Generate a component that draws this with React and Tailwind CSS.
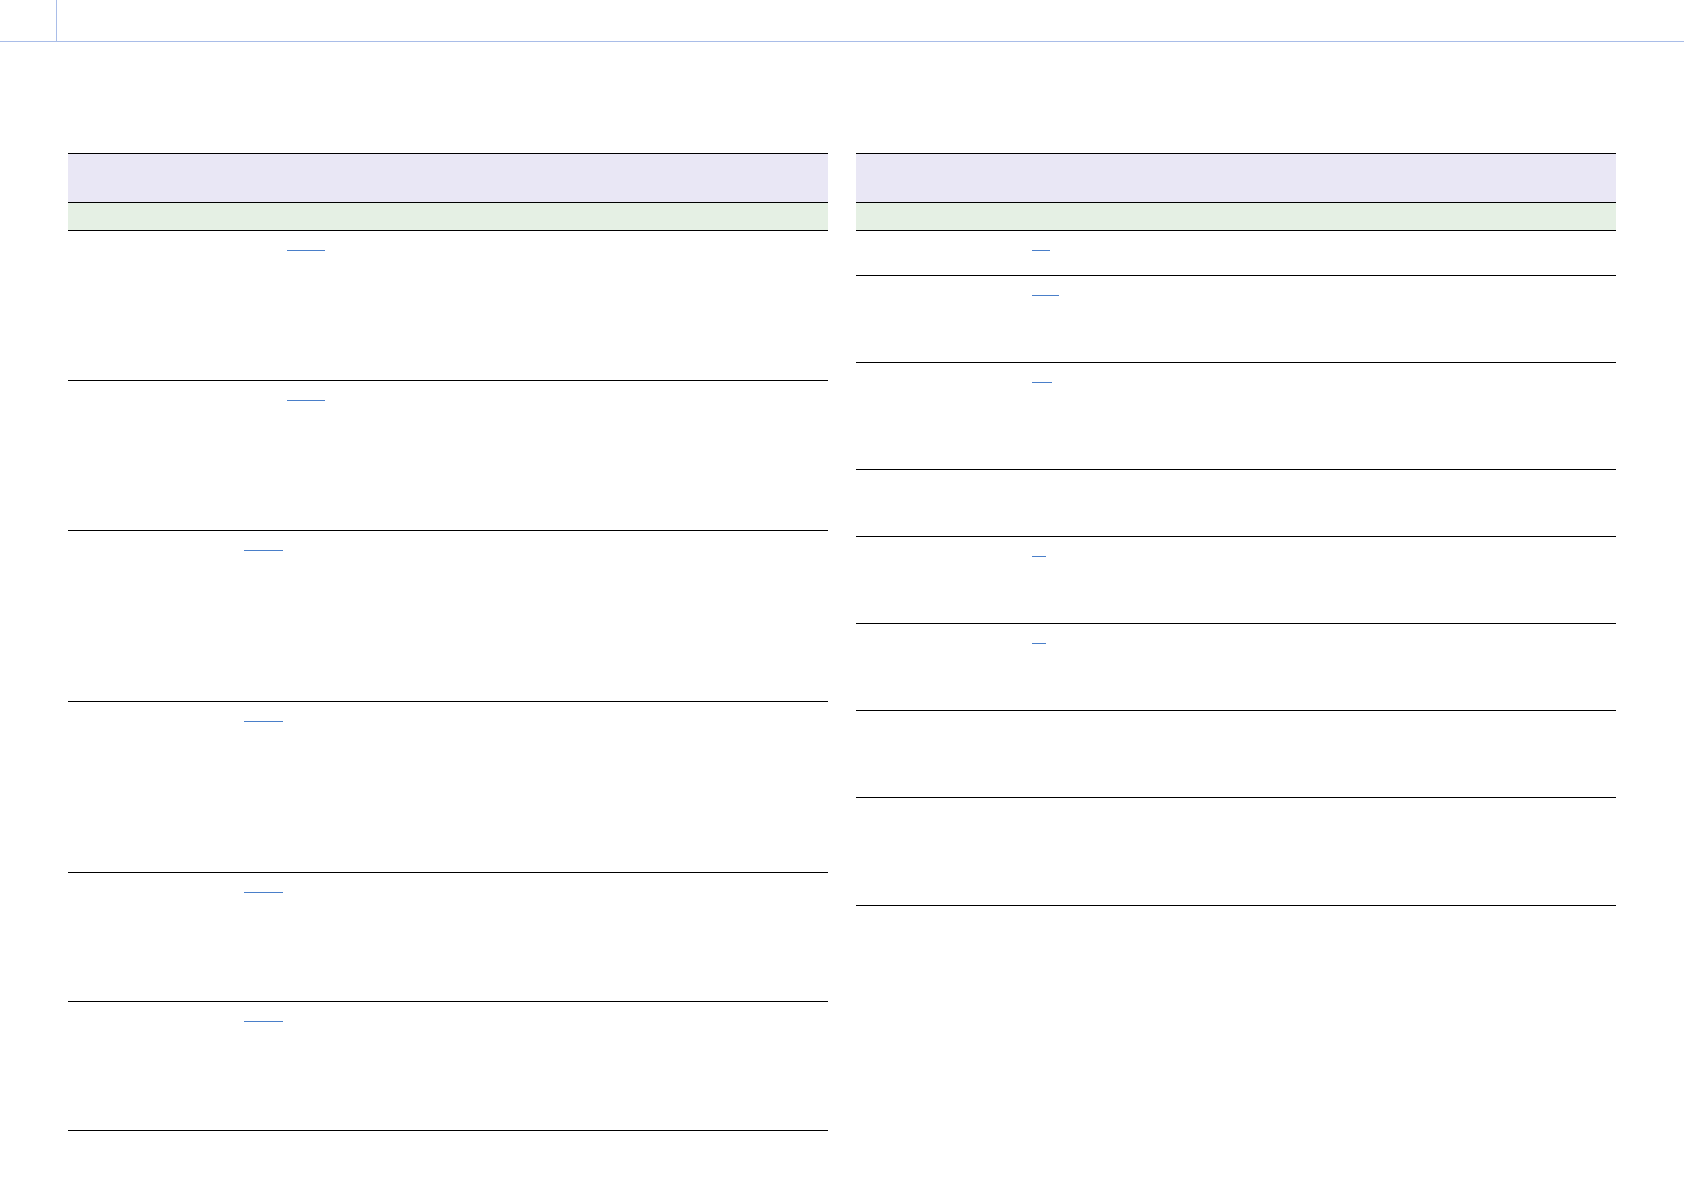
const LEFT_ROWS = [
  { h: 150, x: 219, w: 38 },
  { h: 150, x: 219, w: 38 },
  { h: 171, x: 176, w: 39 },
  { h: 171, x: 176, w: 39 },
  { h: 129, x: 176, w: 39 },
  { h: 129, x: 176, w: 39 },
];

const RIGHT_ROWS = [
  { h: 45, x: 176, w: 18 },
  { h: 87, x: 176, w: 27 },
  { h: 107, x: 176, w: 20 },
  { h: 67 },
  { h: 87, x: 176, w: 14 },
  { h: 87, x: 176, w: 14 },
  { h: 87 },
  { h: 108 },
];

function Row({ row }) {
  return (
    <div className="border-b border-black box-border pt-[19px]" style={{ height: row.h }}>
      {row.w ? (
        <div className="h-[1px] bg-[#4a7fc9]" style={{ marginLeft: row.x, width: row.w }} />
      ) : null}
    </div>
  );
}

function SpecTable({ rows }) {
  return (
    <div className="w-[760px] border-t border-black">
      <div className="h-[49px] bg-[#e9e7f5] border-b border-black" />
      <div className="h-[28px] bg-[#e5f0e4] border-b border-black" />
      {rows.map((r, i) => (
        <Row key={i} row={r} />
      ))}
    </div>
  );
}

export default function App() {
  return (
    <div className="w-[1684px] h-[1191px] bg-white overflow-hidden" style={{ fontFamily: '"Liberation Sans", Arial, sans-serif' }}>
      {/* top strip */}
      <div className="h-[42px] border-b border-[#a9bde8] flex">
        <div className="w-[57px] border-r border-[#a9bde8]" />
      </div>

      <div className="flex items-start gap-[28px] pl-[68px] pt-[111px]">
        <SpecTable rows={LEFT_ROWS} />
        <SpecTable rows={RIGHT_ROWS} />
      </div>
    </div>
  );
}
